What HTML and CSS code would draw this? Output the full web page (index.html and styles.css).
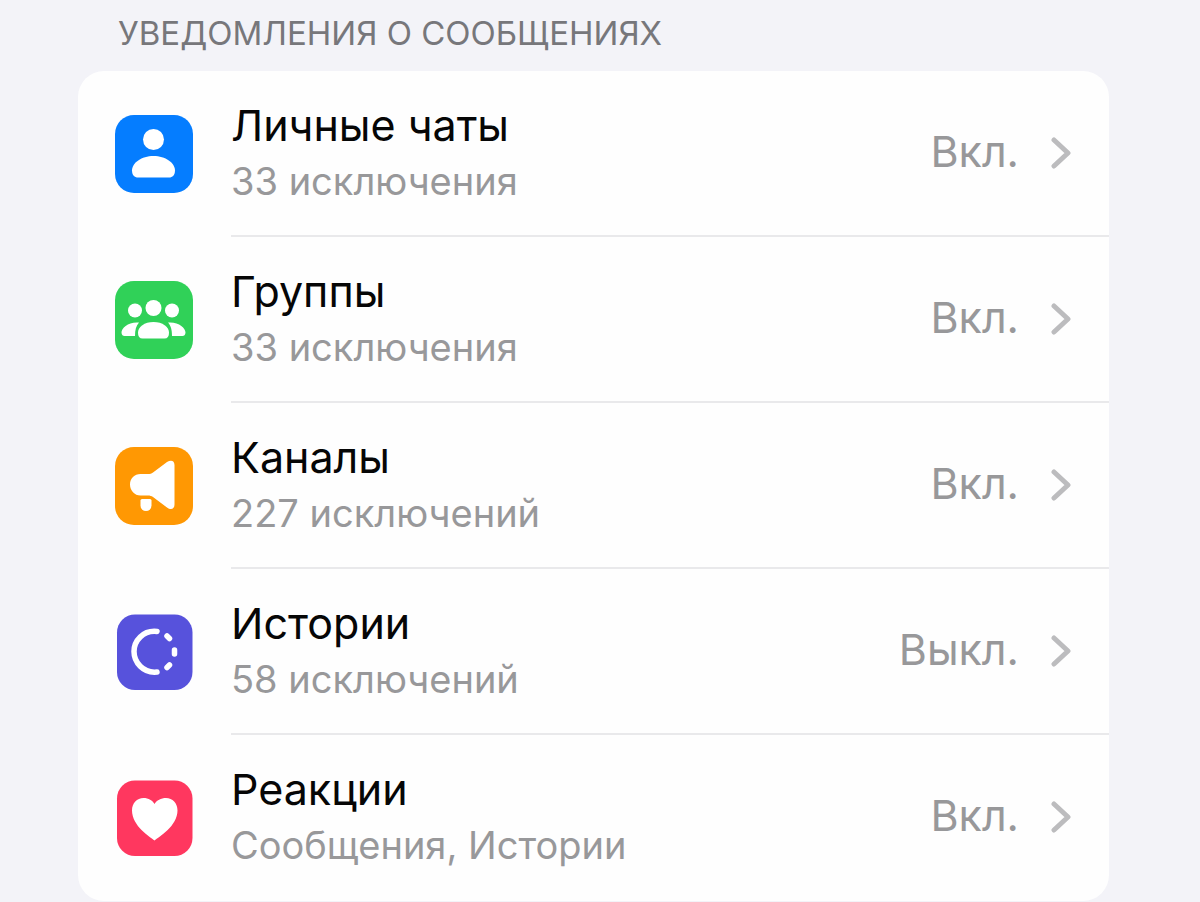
FILE: index.html
```html
<!DOCTYPE html>
<html lang="ru">
<head>
    <meta charset="UTF-8">
    <meta name="viewport" content="width=device-width, initial-scale=1.0">
    <title>Уведомления</title>
    <link rel="stylesheet" href="styles.css">
</head>
<body>
    <main class="settings">
        <h2 class="section-title">Уведомления о сообщениях</h2>
        <nav class="card">
            <a class="row" href="#private">
                <svg class="icon" viewBox="0 0 78 78" aria-hidden="true">
                    <rect width="78" height="78" rx="19" fill="#057dff"/>
                    <circle cx="38.500" cy="24.500" r="10.500" fill="#fff"/>
                    <path d="M17 55.500C17 48 26.500 41 38.500 41S60 48 60 55.500C60 60 57.500 62.500 54 62.500H23C19.500 62.500 17 60 17 55.500Z" fill="#fff"/>
                </svg>
                <span class="row-body">
                    <span class="row-text">
                        <span class="title">Личные чаты</span>
                        <span class="subtitle">33 исключения</span>
                    </span>
                    <span class="value">Вкл.</span>
                    <svg class="chevron" viewBox="0 0 20 32" aria-hidden="true"><path d="M3 3L17 16L3 29"/></svg>
                </span>
            </a>
            <a class="row" href="#groups">
                <svg class="icon" viewBox="0 0 78 78" aria-hidden="true">
                    <rect width="78" height="78" rx="19" fill="#30d158"/>
                    <g fill="#fff">
                        <circle cx="20" cy="29.500" r="7"/>
                        <circle cx="57" cy="29.500" r="7"/>
                        <circle cx="38.500" cy="27" r="8"/>
                        <path d="M24 41.500C13.500 40.500 6.500 47 6.500 51.500C6.500 54 8 55 9.500 55H20C20 49 21 45 24 41.500Z"/>
                        <path d="M53 41.500C63.500 40.500 70.500 47 70.500 51.500C70.500 54 69 55 67.500 55H57C57 49 56 45 53 41.500Z"/>
                        <path d="M23 51.500C23 46 29.500 41 38.500 41S54 46 54 51.500C54 55.500 52.500 57.500 49.500 57.500H27.500C24.500 57.500 23 55.500 23 51.500Z"/>
                    </g>
                </svg>
                <span class="row-body">
                    <span class="row-text">
                        <span class="title">Группы</span>
                        <span class="subtitle">33 исключения</span>
                    </span>
                    <span class="value">Вкл.</span>
                    <svg class="chevron" viewBox="0 0 20 32" aria-hidden="true"><path d="M3 3L17 16L3 29"/></svg>
                </span>
            </a>
            <a class="row" href="#channels">
                <svg class="icon" viewBox="0 0 78 78" aria-hidden="true">
                    <rect width="78" height="78" rx="19" fill="#ff9803"/>
                    <g fill="#fff">
                        <path d="M25.500 27H33C35 27 36.500 26.500 38 25.500L52 15C56 12.500 59.500 13.500 59.500 18V57.500C59.500 62 56 63.500 52 60.500L38 50C36.500 49 35 48.500 33 48.500H25.500C19.500 48.500 15 43.500 15 37.500S19.500 27 25.500 27Z"/>
                        <path d="M27 52H35Q36.500 52 36.500 53.500V58.500A5.500 5.500 0 0 1 25.500 58.500V53.500Q25.500 52 27 52Z"/>
                    </g>
                </svg>
                <span class="row-body">
                    <span class="row-text">
                        <span class="title">Каналы</span>
                        <span class="subtitle">227 исключений</span>
                    </span>
                    <span class="value">Вкл.</span>
                    <svg class="chevron" viewBox="0 0 20 32" aria-hidden="true"><path d="M3 3L17 16L3 29"/></svg>
                </span>
            </a>
            <a class="row" href="#stories">
                <svg class="icon" viewBox="0 0 78 78" aria-hidden="true">
                    <rect x="2" y="1.500" width="75.500" height="75.500" rx="18" fill="#5752dc"/>
                    <g fill="none" stroke="#fff" stroke-width="5.500" stroke-linecap="round">
                        <path d="M42 18.500C28 17 19 28 19 38.500S28 60.500 42 59"/>
                        <path d="M52 23L54.500 25.500M59.500 37V41M52 54.500L54.500 52"/>
                    </g>
                </svg>
                <span class="row-body">
                    <span class="row-text">
                        <span class="title">Истории</span>
                        <span class="subtitle">58 исключений</span>
                    </span>
                    <span class="value">Выкл.</span>
                    <svg class="chevron" viewBox="0 0 20 32" aria-hidden="true"><path d="M3 3L17 16L3 29"/></svg>
                </span>
            </a>
            <a class="row" href="#reactions">
                <svg class="icon" viewBox="0 0 78 78" aria-hidden="true">
                    <rect x="2" y="1.500" width="75.500" height="75.500" rx="18" fill="#ff375f"/>
                    <path d="M39.500 61.500C35 58 17 47 17 31.500C17 24 22 19 28.500 19C33.500 19 37.500 21.500 39.500 25C41.500 21.500 46 19 51 19C57.500 19 62.500 24 62.500 31.500C62.500 47 44 58 39.500 61.500Z" fill="#fff"/>
                </svg>
                <span class="row-body">
                    <span class="row-text">
                        <span class="title">Реакции</span>
                        <span class="subtitle">Сообщения, Истории</span>
                    </span>
                    <span class="value">Вкл.</span>
                    <svg class="chevron" viewBox="0 0 20 32" aria-hidden="true"><path d="M3 3L17 16L3 29"/></svg>
                </span>
            </a>
        </nav>
    </main>
</body>
</html>
```
FILE: styles.css
```css
:root {
    --bg-color: #f3f3f8;
    --card-bg: #fefefe;
    --text-color: #060606;
    --muted: #98989a;
    --header-color: #77777b;
    --line: #e9e9eb;
}

* {
    box-sizing: border-box;
}

body {
    font-family: Inter, "Liberation Sans", sans-serif;
    background: var(--bg-color);
    color: var(--text-color);
    margin: 0;
}
.settings {
    padding: 11px 91px 0 78px;
}
.section-title {
    margin: 0 0 16px;
    padding-left: 40px;
    font-size: 33px;
    font-weight: 400;
    line-height: 44px;
    text-transform: uppercase;
    color: var(--header-color);
}
.card {
    background: var(--card-bg);
    border-radius: 26px;
    overflow: hidden;
}
.row {
    display: flex;
    align-items: center;
    gap: 38px;
    padding-left: 37px;
    color: inherit;
    text-decoration: none;
}
.icon {
    width: 78px;
    height: 78px;
    flex: none;
}
.row-body {
    flex: 1;
    display: flex;
    align-items: center;
    padding: 25px 38px 26px 0;
    border-bottom: 2px solid var(--line);
}
.row:last-child .row-body {
    border-bottom-color: transparent;
}
.row-text {
    flex: 1;
    display: flex;
    flex-direction: column;
}
.title {
    font-size: 43px;
    line-height: 58px;
}
.subtitle {
    font-size: 38px;
    line-height: 55px;
    color: var(--muted);
}
.value {
    padding-bottom: 4px;
    font-size: 43px;
    line-height: 58px;
    color: var(--muted);
}
.chevron {
    width: 20px;
    height: 32px;
    margin-left: 32px;
    fill: none;
    stroke: #bcbcbe;
    stroke-width: 5;
    stroke-linecap: round;
    stroke-linejoin: round;
}
```
